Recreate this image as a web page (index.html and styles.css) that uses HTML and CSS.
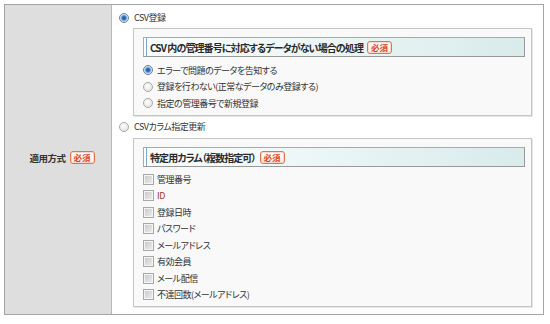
FILE: index.html
```html
<!DOCTYPE html>
<html lang="ja">
<head>
<meta charset="utf-8">
<link rel="stylesheet" href="styles.css">
</head>
<body>
<div class="form-table">
  <div class="th">
    <span class="th-label">適用方式</span><span class="badge">必須</span>
  </div>
  <div class="td">
    <div class="opt top-opt"><span class="radio checked"></span><span>CSV登録</span></div>
    <div class="box box1">
      <div class="box-head"><span>CSV 内の管理番号に対応するデータがない場合の処理</span><span class="badge">必須</span></div>
      <div class="list">
        <div class="opt"><span class="radio checked"></span><span>エラーで問題のデータを告知する</span></div>
        <div class="opt"><span class="radio"></span><span>登録を行わない(正常なデータのみ登録する)</span></div>
        <div class="opt"><span class="radio"></span><span>指定の管理番号で新規登録</span></div>
      </div>
    </div>
    <div class="opt top-opt second"><span class="radio"></span><span>CSVカラム指定更新</span></div>
    <div class="box box2">
      <div class="box-head"><span>特定用カラム（複数指定可）</span><span class="badge">必須</span></div>
      <div class="list checks">
        <div class="opt"><span class="check"></span><span>管理番号</span></div>
        <div class="opt"><span class="check"></span><span class="red">ID</span></div>
        <div class="opt"><span class="check"></span><span>登録日時</span></div>
        <div class="opt"><span class="check"></span><span>パスワード</span></div>
        <div class="opt"><span class="check"></span><span>メールアドレス</span></div>
        <div class="opt"><span class="check"></span><span>有効会員</span></div>
        <div class="opt"><span class="check"></span><span>メール配信</span></div>
        <div class="opt"><span class="check"></span><span>不達回数(メールアドレス)</span></div>
      </div>
    </div>
  </div>
</div>
</body>
</html>
```
FILE: styles.css
```css
* { box-sizing: border-box; }
html, body { margin: 0; padding: 0; background: #fff; }
body {
  font-family: "Noto Sans CJK JP", "DejaVu Sans", sans-serif;
  font-size: 9px;
  font-feature-settings: "palt" 1;
  letter-spacing: -0.5px;
  color: #333;
  padding: 4px 0 0 4px;
}
.form-table {
  width: 540px;
  height: 311px;
  border: 1px solid #a4a4a4;
  display: flex;
}
.th {
  width: 107px;
  background: #dedede;
  border-right: 1px solid #b8b8b8;
  display: flex;
  align-items: center;
  justify-content: center;
  padding-left: 8px;
  padding-bottom: 4px;
}
.th-label { font-weight: bold; font-size: 9.5px; color: #333; margin-right: 4px; }
.badge {
  display: inline-flex;
  align-items: center;
  justify-content: center;
  width: 25px;
  height: 13px;
  border: 1px solid #e4744c;
  border-radius: 3px;
  background: linear-gradient(#fff, #fdeee8);
  color: #e0461c;
  font-size: 8.5px;
  font-weight: bold;
  letter-spacing: 0;
  line-height: 1;
  box-shadow: 0 0 0 1px #fbd9cc inset;
}
.td {
  flex: 1;
  padding: 4px 11px 0 7px;
  display: flex;
  flex-direction: column;
}
.opt {
  display: flex;
  align-items: center;
  height: 16.5px;
  white-space: nowrap;
}
.top-opt { height: 17px; }
.top-opt .radio { margin-right: 5px; }
.second { margin-top: 2px; }
.radio {
  width: 10px;
  height: 10px;
  border-radius: 50%;
  border: 1px solid #a9a9a9;
  background: radial-gradient(circle at 40% 35%, #fff, #dcdcdc);
  margin-right: 4px;
  flex: none;
}
.radio.checked {
  border-color: #6a7f99;
  background: radial-gradient(circle at 50% 50%, #1f4f95 0, #3d7ccc 2px, #9fc2ea 3px, #e8eef5 4px);
}
.box {
  margin-left: 14px;
  margin-top: 2px;
  border: 1px solid #c6c6c6;
  box-shadow: 1px 1px 0 #e6e6e6;
  background: #f9f9f9;
  padding: 8px 6px 0 9px;
}
.box1 { height: 88px; }
.box2 { height: 169px; margin-top: 3px; }
.box-head {
  height: 20px;
  border: 1px solid #a9a9a9;
  border-right-color: #999;
  border-bottom-color: #999;
  background: linear-gradient(90deg, #fafdfd 0%, #eef7f7 40%, #d9ebeb 100%);
  box-shadow: inset 2px 0 0 #fff, inset 3px 0 0 #7aa8d0;
  display: flex;
  align-items: center;
  padding-left: 6px;
  font-weight: bold;
  font-size: 10px;
  letter-spacing: -0.9px;
  color: #2a2a2a;
  margin-bottom: 4px;
}
.box-head .badge { margin-left: 4px; }
.box1 .box-head { margin-bottom: 5px; }
.check {
  width: 11px;
  height: 11px;
  border: 1px solid #a8a8a8;
  background: linear-gradient(135deg, #c8c8c8, #eeeeee);
  box-shadow: inset 0 0 0 1px #f4f4f4;
  margin-right: 3px;
  flex: none;
}
.red { color: #9b3b2b; }
```
